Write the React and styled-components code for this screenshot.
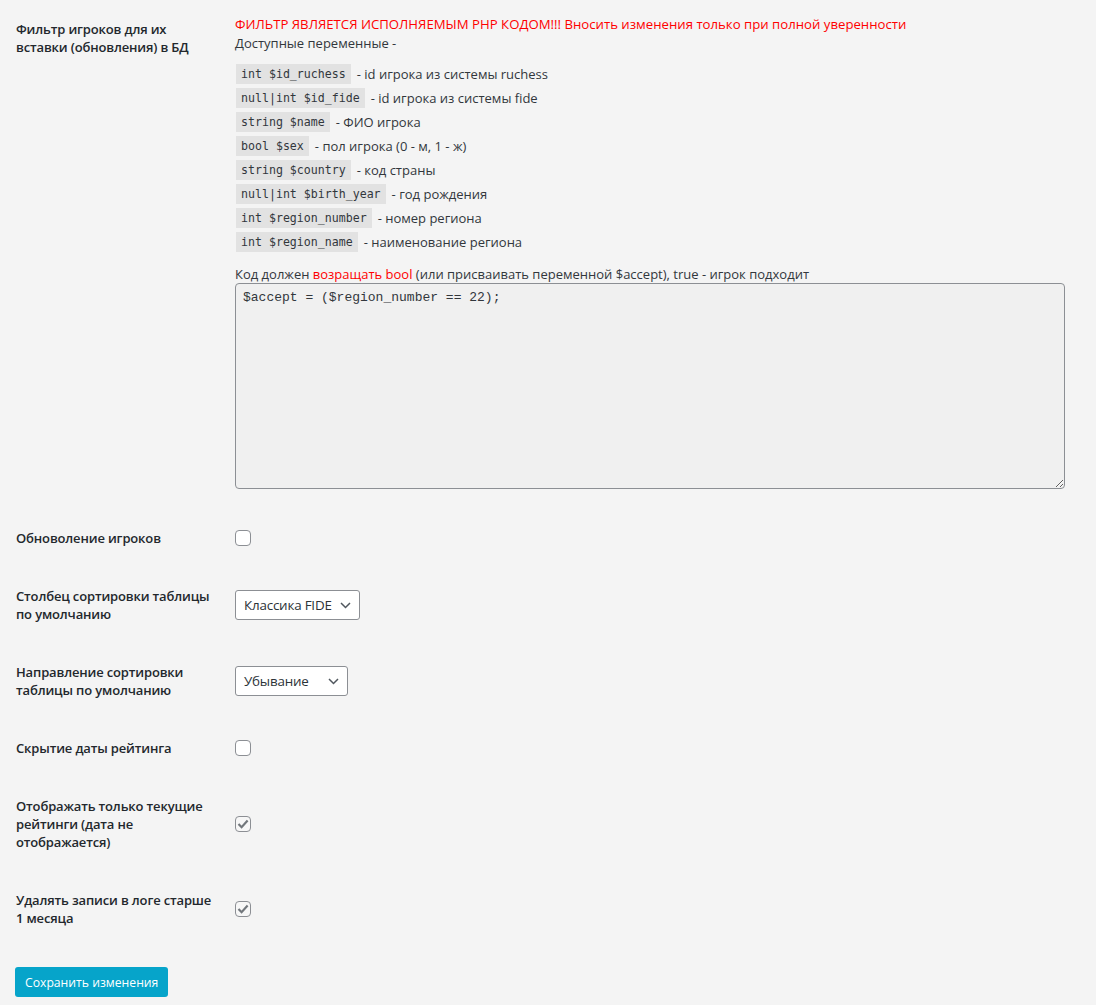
import React from "react";
import styled, { createGlobalStyle } from "styled-components";

const GlobalStyle = createGlobalStyle`
  html, body {
    margin: 0;
    padding: 0;
    background: #f4f4f4;
  }
  body {
    font-family: "Open Sans", "Noto Sans", sans-serif;
    color: #32373c;
  }
`;

const Page = styled.form`
  padding: 0 21px 0 16px;
`;

const Row = styled.div`
  display: grid;
  grid-template-columns: 219px 1fr;
  align-items: center;
`;

const Label = styled.div`
  align-self: start;
  padding: 20px 19px 20px 0;
  font-size: 13px;
  font-weight: 600;
  letter-spacing: -0.15px;
  line-height: 18px;
  color: #23282d;
`;

const Field = styled.div`
  padding: ${(p) => (p.$tall ? "15px 10px 20px 0" : "15px 10px 15px 0")};
  font-size: 13px;
  line-height: 19px;
`;

const Warning = styled.div`
  color: #f00;
  font-size: 13.2px;
`;

const VarList = styled.ul`
  list-style: none;
  margin: 12px 0 0;
  padding: 0;
`;

const VarItem = styled.li`
  display: flex;
  align-items: center;
  height: 18px;
  margin-bottom: 6px;
  white-space: pre;
`;

const Code = styled.code`
  font-family: "DejaVu Sans Mono", "Liberation Mono", monospace;
  font-size: 11.6px;
  line-height: 15px;
  background: rgba(0, 0, 0, 0.07);
  padding: 3px 5px 2px;
  margin: 0 6px 0 1px;
`;

const Note = styled.div`
  margin-top: 14px;
  line-height: 18px;
`;

const Red = styled.span`
  color: #f00;
`;

const CodeArea = styled.textarea`
  display: block;
  box-sizing: border-box;
  width: 100%;
  height: 206px;
  margin: 0;
  padding: 4px 7px;
  font-family: "Liberation Mono", "Courier New", monospace;
  font-size: 13px;
  line-height: 20px;
  color: #32373c;
  background: #f0f0f0;
  border: 1px solid #8c8f94;
  border-radius: 4px;
  resize: vertical;
  outline: none;
`;

const Box = styled.span`
  display: block;
  box-sizing: border-box;
  width: 16px;
  height: 16px;
  border: 1px solid #8c8f94;
  border-radius: 4px;
  background: ${(p) => (p.$checked ? "#f7f7f7" : "#fff")};
  position: relative;
  & svg {
    position: absolute;
    left: 1px;
    top: 1px;
  }
`;

const SelectBox = styled.div`
  box-sizing: border-box;
  width: ${(p) => p.$width}px;
  height: 30px;
  display: flex;
  align-items: center;
  justify-content: space-between;
  padding: 0 8px 0 8px;
  background: #fff;
  border: 1px solid #8c8f94;
  border-radius: 3px;
  font-size: 13.4px;
  letter-spacing: -0.2px;
  color: #2c3338;
  white-space: nowrap;
  overflow: hidden;
`;

const Submit = styled.div`
  padding: 20px 0 10px;
`;

const Button = styled.button`
  height: 30px;
  margin-left: -1px;
  padding: 0 10px;
  background: #06a4ca;
  color: #fff;
  border: none;
  border-radius: 3px;
  font-family: "Open Sans", "Noto Sans", sans-serif;
  font-size: 12.2px;
  cursor: pointer;
`;

function Checkbox({ checked }) {
  return (
    <Box $checked={checked}>
      {checked && (
        <svg width="12" height="12" viewBox="0 0 12 12">
          <path
            d="M1.5 6 L4.6 9.2 L10.6 2.6"
            fill="none"
            stroke="#72777c"
            strokeWidth="2.2"
          />
        </svg>
      )}
    </Box>
  );
}

function Select({ value, width }) {
  return (
    <SelectBox $width={width}>
      <span>{value}</span>
      <svg width="11" height="7" viewBox="0 0 11 7">
        <path d="M1 1 L5.5 5.5 L10 1" fill="none" stroke="#50575e" strokeWidth="1.5" />
      </svg>
    </SelectBox>
  );
}

const vars = [
  ["int $id_ruchess", "id игрока из системы ruchess"],
  ["null|int $id_fide", "id игрока из системы fide"],
  ["string $name", "ФИО игрока"],
  ["bool $sex", "пол игрока (0 - м, 1 - ж)"],
  ["string $country", "код страны"],
  ["null|int $birth_year", "год рождения"],
  ["int $region_number", "номер региона"],
  ["int $region_name", "наименование региона"],
];

export default function App() {
  return (
    <>
      <GlobalStyle />
      <Page onSubmit={(e) => e.preventDefault()}>
        <Row>
          <Label>Фильтр игроков для их вставки (обновления) в БД</Label>
          <Field $tall>
            <Warning>
              ФИЛЬТР ЯВЛЯЕТСЯ ИСПОЛНЯЕМЫМ PHP КОДОМ!!! Вносить изменения только при полной уверенности
            </Warning>
            <div>Доступные переменные -</div>
            <VarList>
              {vars.map(([code, desc]) => (
                <VarItem key={code}>
                  <Code>{code}</Code>
                  {"- " + desc}
                </VarItem>
              ))}
            </VarList>
            <Note>
              Код должен <Red>возращать bool</Red> (или присваивать переменной $accept), true - игрок подходит
            </Note>
            <CodeArea defaultValue="$accept = ($region_number == 22);" spellCheck={false} />
          </Field>
        </Row>
        <Row>
          <Label>Обноволение игроков</Label>
          <Field>
            <Checkbox />
          </Field>
        </Row>
        <Row>
          <Label>Столбец сортировки таблицы по умолчанию</Label>
          <Field>
            <Select value="Классика FIDE" width={125} />
          </Field>
        </Row>
        <Row>
          <Label>Направление сортировки таблицы по умолчанию</Label>
          <Field>
            <Select value="Убывание" width={113} />
          </Field>
        </Row>
        <Row>
          <Label>Скрытие даты рейтинга</Label>
          <Field>
            <Checkbox />
          </Field>
        </Row>
        <Row>
          <Label>Отображать только текущие рейтинги (дата не отображается)</Label>
          <Field>
            <Checkbox checked />
          </Field>
        </Row>
        <Row>
          <Label>Удалять записи в логе старше 1 месяца</Label>
          <Field>
            <Checkbox checked />
          </Field>
        </Row>
        <Submit>
          <Button type="submit">Сохранить изменения</Button>
        </Submit>
      </Page>
    </>
  );
}
